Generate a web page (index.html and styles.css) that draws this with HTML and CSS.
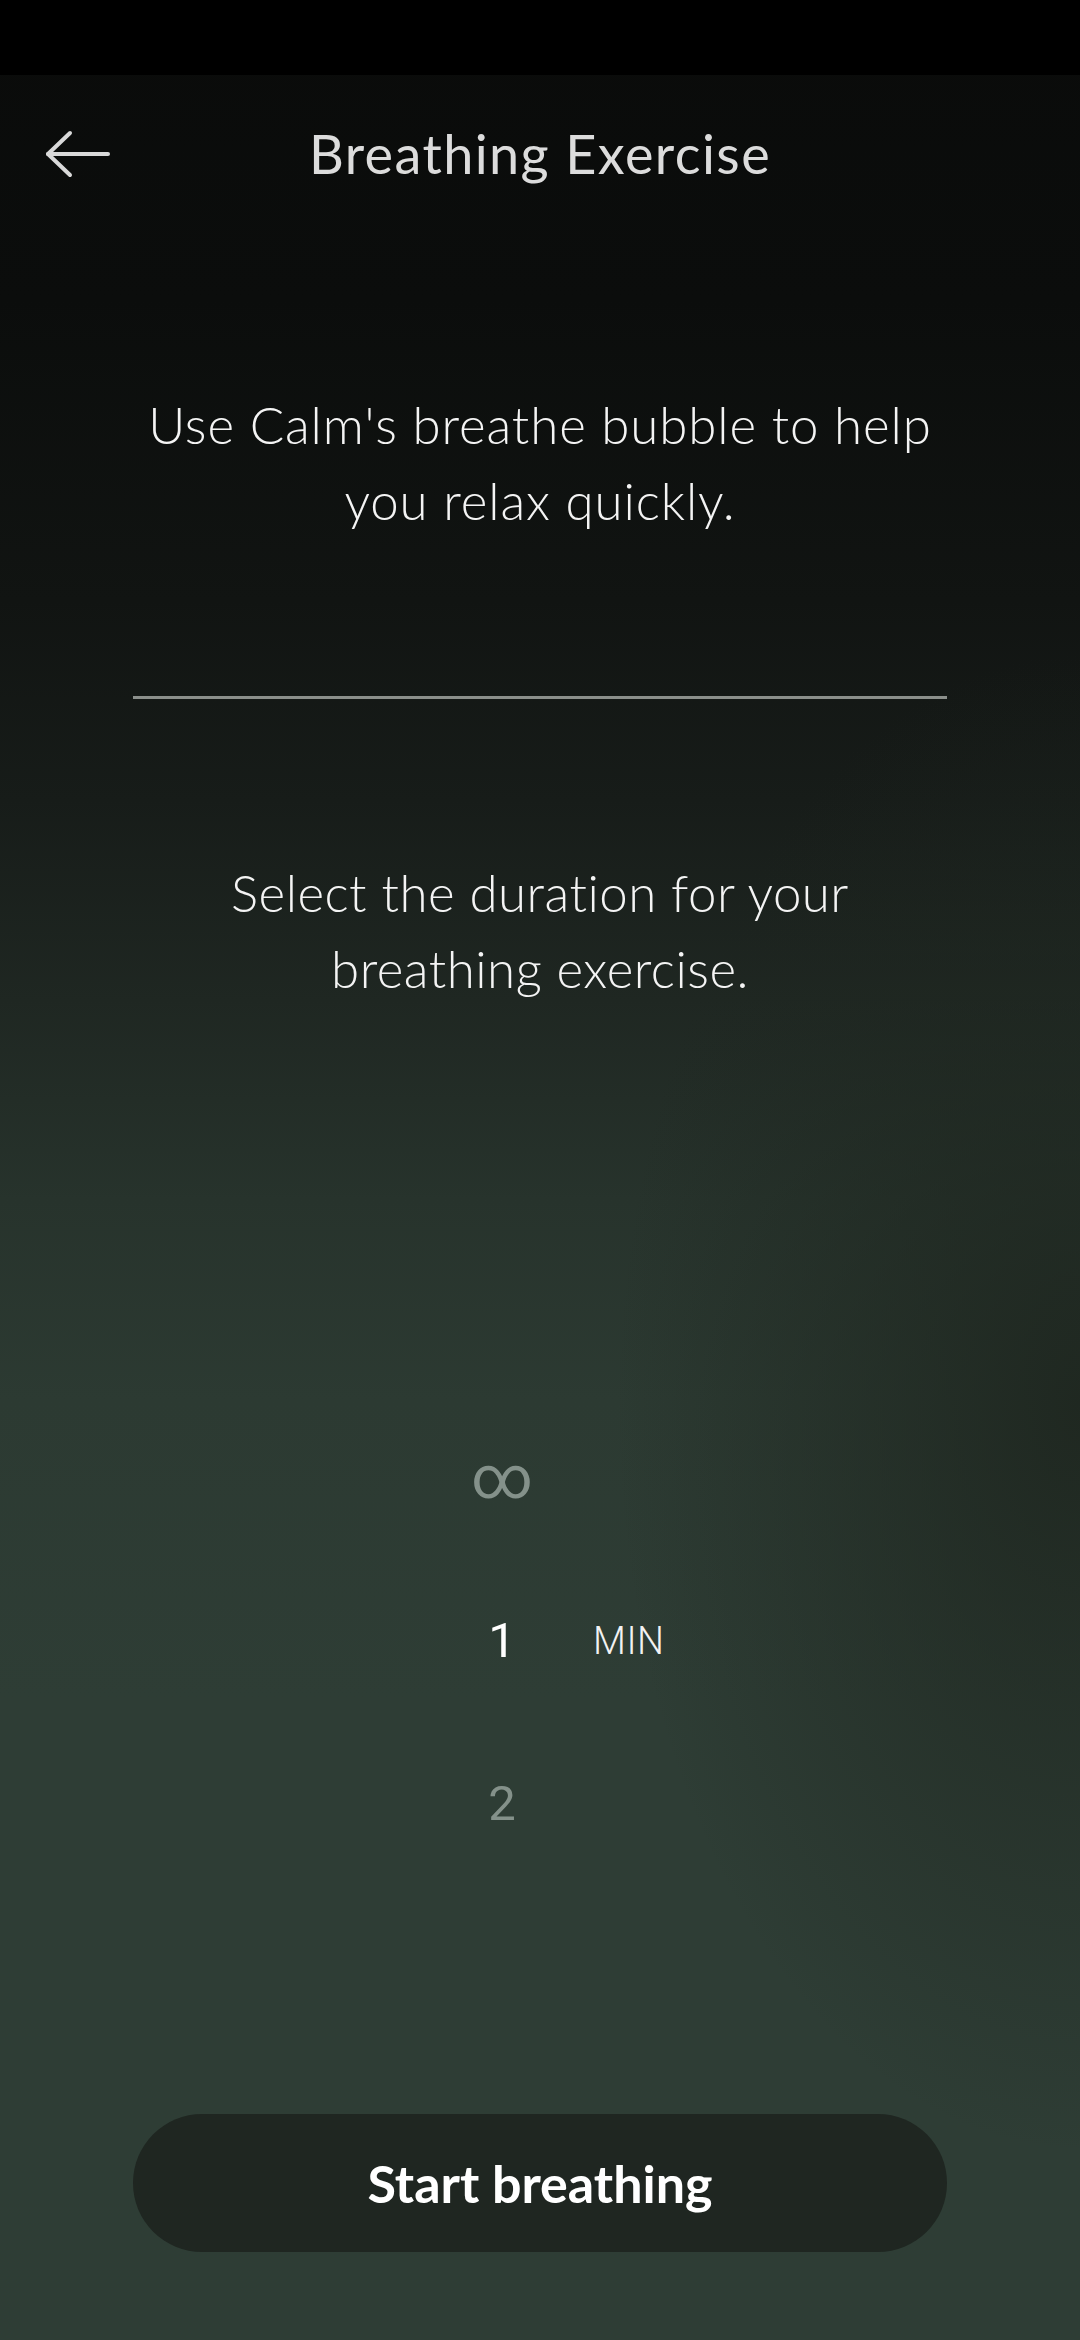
FILE: index.html
```html
<!DOCTYPE html>
<html lang="en">
<head>
<meta charset="utf-8">
<title>Breathing Exercise</title>
<link rel="stylesheet" href="styles.css">
</head>
<body>
<div class="screen">
  <div class="status"></div>
  <header class="topbar">
    <button class="back" aria-label="Back">
      <svg width="76" height="60" viewBox="0 0 76 60" fill="none" stroke="currentColor" stroke-width="4" stroke-linecap="round" stroke-linejoin="round">
        <path d="M68 30 H8"/>
        <path d="M30 9 L8 30 L30 51"/>
      </svg>
    </button>
    <h1 class="title">Breathing Exercise</h1>
    <span class="spacer"></span>
  </header>
  <p class="intro">Use Calm's breathe bubble to help<br>you relax quickly.</p>
  <hr class="divider">
  <p class="prompt">Select the duration for your<br>breathing exercise.</p>
  <div class="picker">
    <div class="row"><span class="num dim inf">∞</span><span class="unit"></span></div>
    <div class="row"><span class="num">1</span><span class="unit">MIN</span></div>
    <div class="row"><span class="num dim">2</span><span class="unit"></span></div>
  </div>
  <button class="start">Start breathing</button>
</div>
</body>
</html>
```

FILE: styles.css
```css
html, body {
  margin: 0;
  padding: 0;
  background: #000;
}

.screen {
  width: 1080px;
  height: 2340px;
  display: flex;
  flex-direction: column;
  overflow: hidden;
  font-family: Lato, "Open Sans", "Liberation Sans", sans-serif;
  color: #fff;
  background:
    radial-gradient(ellipse 620px 1000px at 100% 60%, rgba(30, 38, 31, 0.9), rgba(30, 38, 31, 0) 75%),
    linear-gradient(180deg, #0a0b0a 0px, #0b0d0c 300px, #111412 600px, #171c19 800px, #1f2722 1000px, #27332c 1200px, #2c3a32 1400px, #2e3d35 1700px, #2e3d35 2340px);
}

.status {
  height: 75px;
  background: #000;
  flex: none;
}

.topbar {
  height: 157px;
  display: grid;
  grid-template-columns: 1fr auto 1fr;
  align-items: center;
  flex: none;
}

.back {
  justify-self: start;
  margin-left: 40px;
  padding: 0;
  border: 0;
  background: none;
  color: #d9d9d9;
  display: flex;
  align-items: center;
}

.title {
  margin: 0;
  font-size: 54px;
  font-weight: 400;
  color: #dcdcdc;
  line-height: 60px;
  letter-spacing: 1.4px;
}

.intro,
.prompt {
  margin: 0;
  text-align: center;
  font-size: 51px;
  font-weight: 300;
  line-height: 76px;
  color: #f4f4f4;
}

.intro {
  margin-top: 155px;
  letter-spacing: 0.9px;
}

.prompt {
  margin-top: 156px;
  letter-spacing: 0.5px;
}

.divider {
  margin: 157px 0 0 133px;
  width: 814px;
  height: 3px;
  border: 0;
  background: #8b8f8b;
  flex: none;
}

.picker {
  margin-top: 389px;
  padding-left: 442px;
  display: flex;
  flex-direction: column;
}

.row {
  height: 163px;
  display: grid;
  grid-template-columns: 120px auto;
  column-gap: 31px;
  align-items: center;
}

.num {
  text-align: center;
  font-family: Roboto, "Liberation Sans", sans-serif;
  font-size: 49px;
  font-weight: 400;
  color: #ffffff;
}

.num.dim {
  color: #84918a;
}

.num.inf {
  font-size: 60px;
}

.unit {
  font-family: Roboto, "Liberation Sans", sans-serif;
  font-size: 38px;
  font-weight: 300;
  color: #f2f2f2;
  letter-spacing: 0.5px;
}

.start {
  margin: 229px auto 0;
  width: 814px;
  height: 138px;
  border: 0;
  border-radius: 69px;
  background: #1f2621;
  color: #fff;
  font-family: Lato, "Open Sans", "Liberation Sans", sans-serif;
  font-size: 52px;
  font-weight: 700;
  flex: none;
}
```
